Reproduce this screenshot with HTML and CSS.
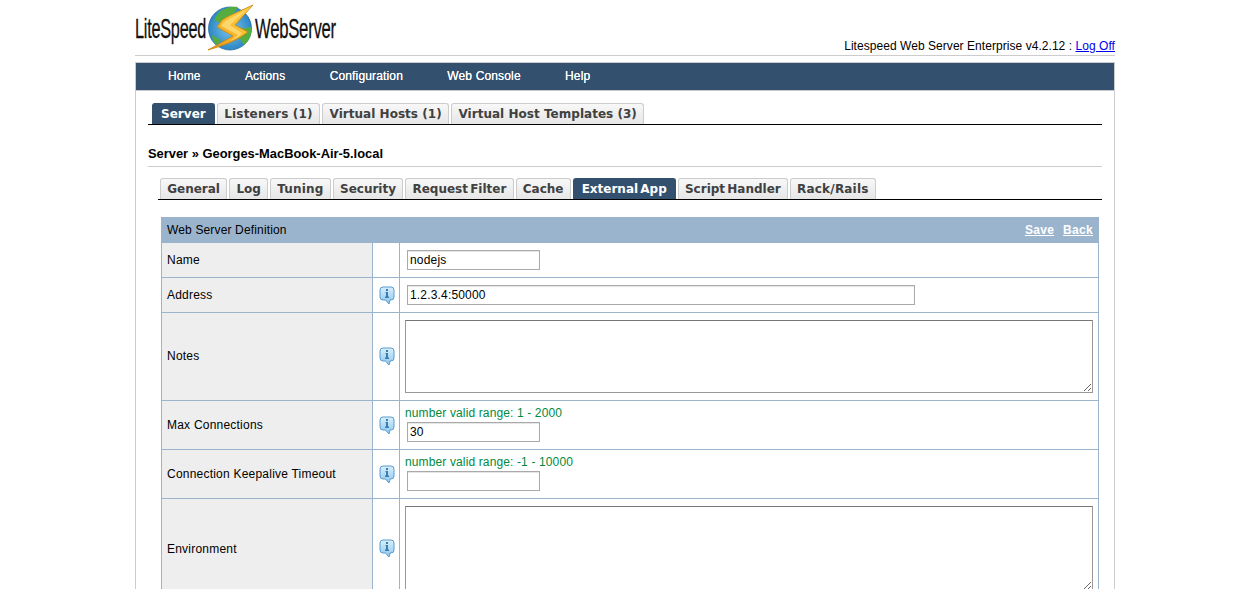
FILE: index.html
```html
<!DOCTYPE html>
<html lang="en">
<head>
<meta charset="utf-8">
<title>LiteSpeed Web Server</title>
<link rel="stylesheet" href="styles.css">
</head>
<body>
<svg class="defs" width="0" height="0" aria-hidden="true">
  <defs>
    <linearGradient id="bub" x1="0" y1="0" x2="0" y2="1">
      <stop offset="0" stop-color="#d9effb"/>
      <stop offset="1" stop-color="#8cc6ec"/>
    </linearGradient>
    <linearGradient id="bolt" x1="1" y1="0" x2="0" y2="1">
      <stop offset="0" stop-color="#fbd24a"/>
      <stop offset="0.5" stop-color="#f8bb2e"/>
      <stop offset="1" stop-color="#e58f14"/>
    </linearGradient>
    <radialGradient id="globe" cx="0.5" cy="0.5" r="0.55">
      <stop offset="0" stop-color="#7cc6ea"/>
      <stop offset="1" stop-color="#2380c2"/>
    </radialGradient>
    <symbol id="info" viewBox="0 0 16 19">
      <path d="M4 1h8a3 3 0 0 1 3 3v7a3 3 0 0 1-3 3h-1l-1 4-3.500-4H4a3 3 0 0 1-3-3V4a3 3 0 0 1 3-3z" fill="url(#bub)" stroke="#5b9bcd"/>
      <rect x="7" y="3" width="2" height="2" fill="#3a7db5"/>
      <path d="M6.500 6H9V10.500h1V12H6v-1.500h1V7h-.5z" fill="#3a7db5"/>
    </symbol>
  </defs>
</svg>
<div class="page">
  <header class="top">
    <div class="logo">
      <span class="logo-text lite">LiteSpeed</span>
      <svg class="logo-mark" width="50" height="50" viewBox="0 0 50 50" aria-hidden="true">
        <circle cx="25" cy="25.500" r="21.500" fill="url(#globe)" stroke="#2a6f9f" stroke-width=".8"/>
        <path d="M14 9c6-4 12-6 19-5l-5 7-8 4-5 5-6-3zM31 27l15-3c1 8-2 14-7 18l-4-6-6-3zM7 32l9 5-4 5c-3-2-5-6-5-10z" fill="#55ad3f"/>
        <path d="M48 2C38 7 26 11 17 17l-5 7 16 9L3 47c14-4 28-9 37-16l3-2-13-7z" fill="url(#bolt)" stroke="#c9820f" stroke-width=".8"/>
        <path d="M41 7C33 12 24 15 18 20l-2 3 17 9-8 6c5-2 9-4 12-8l-12-8z" fill="#fde58a" opacity=".65"/>
      </svg>
      <span class="logo-text web">WebServer</span>
    </div>
    <div class="status">Litespeed Web Server Enterprise v4.2.12 : <a href="#">Log Off</a></div>
  </header>

  <main class="box">
    <nav class="nav">
      <a href="#">Home</a>
      <a href="#">Actions</a>
      <a href="#">Configuration</a>
      <a href="#">Web Console</a>
      <a href="#">Help</a>
    </nav>
    <div class="content">
      <div class="tabs main-tabs">
        <a class="tab active" href="#">Server</a>
        <a class="tab tab-wide" href="#">Listeners (1)</a>
        <a class="tab" href="#">Virtual Hosts (1)</a>
        <a class="tab" href="#">Virtual Host Templates (3)</a>
      </div>
      <h1 class="crumb">Server » Georges-MacBook-Air-5.local</h1>
      <div class="tabs sub-tabs">
        <a class="tab" href="#">General</a>
        <a class="tab" href="#">Log</a>
        <a class="tab tab-wide" href="#">Tuning</a>
        <a class="tab" href="#">Security</a>
        <a class="tab" href="#">Request Filter</a>
        <a class="tab" href="#">Cache</a>
        <a class="tab active" href="#">External App</a>
        <a class="tab" href="#">Script Handler</a>
        <a class="tab tab-wide" href="#">Rack/Rails</a>
      </div>
      <section class="form">
        <div class="form-head">
          <span>Web Server Definition</span>
          <span class="actions"><a href="#">Save</a><a href="#">Back</a></span>
        </div>
        <table class="grid">
          <colgroup><col class="c1"><col class="c2"><col></colgroup>
          <tr class="r-name">
            <th>Name</th><td class="ic"></td>
            <td><input class="short" type="text" value="nodejs"></td>
          </tr>
          <tr class="r-addr">
            <th>Address</th>
            <td class="ic"><svg class="info"><use href="#info"/></svg></td>
            <td><input class="long" type="text" value="1.2.3.4:50000"></td>
          </tr>
          <tr class="r-notes">
            <th>Notes</th>
            <td class="ic"><svg class="info"><use href="#info"/></svg></td>
            <td><textarea class="notes"></textarea></td>
          </tr>
          <tr class="r-num">
            <th>Max Connections</th>
            <td class="ic"><svg class="info"><use href="#info"/></svg></td>
            <td class="num"><div class="hint">number valid range: 1 - 2000</div><input class="short" type="text" value="30"></td>
          </tr>
          <tr class="r-num">
            <th>Connection Keepalive Timeout</th>
            <td class="ic"><svg class="info"><use href="#info"/></svg></td>
            <td class="num"><div class="hint">number valid range: -1 - 10000</div><input class="short" type="text"></td>
          </tr>
          <tr class="r-env">
            <th>Environment</th>
            <td class="ic"><svg class="info"><use href="#info"/></svg></td>
            <td><textarea class="env"></textarea></td>
          </tr>
        </table>
      </section>
    </div>
  </main>
</div>
</body>
</html>
```
FILE: styles.css
```css
* { box-sizing: border-box; }
html { overflow: hidden; height: 589px; }
body {
  margin: 0;
  height: 589px;
  overflow: hidden;
  background: #fff;
  color: #000;
  font: 12px/14px "Liberation Sans", Arial, sans-serif;
}
.defs { position: absolute; }
.page { width: 980px; margin-left: 135px; }

.top {
  height: 56px;
  display: flex;
  justify-content: space-between;
  align-items: flex-end;
  border-bottom: 1px solid #ccc;
}
.logo { display: flex; align-items: center; height: 55px; }
.logo-text {
  font: 28px/30px "Liberation Sans", sans-serif;
  letter-spacing: -0.4px;
  color: #111;
  margin-top: 3px;
  transform-origin: left center;
  white-space: nowrap;
  -webkit-text-stroke: .3px #111;
}
.lite { width: 70px; transform: scaleX(.58); }
.web { width: 81px; transform: scaleX(.595); }
.logo-mark { flex: none; }
.status { padding-bottom: 2px; letter-spacing: .05px; }
.status a { color: #0000ee; }

.box {
  margin-top: 6px;
  border: 1px solid #ccc;
  border-bottom: 0;
}
.nav {
  height: 28px;
  background: #34506f;
  display: flex;
  align-items: center;
  padding: 0 0 2px 32px;
  gap: 44.300px;
  border-bottom: 1px solid #c8c8c8;
}
.nav a {
  color: #fff;
  text-decoration: none;
  letter-spacing: .15px;
  text-shadow: 0 0 .5px #fff;
}
.content { padding: 12px 12px 0; }

.tabs {
  display: flex;
  gap: 2px;
  border-bottom: 1px solid #000;
  font: bold 12px/20px "DejaVu Sans", Verdana, sans-serif;
}
.main-tabs { padding-left: 4px; height: 22px; letter-spacing: .03px; }
.sub-tabs {
  margin: 11px 0 0 10px;
  padding-left: 2px;
  height: 22px;
  word-spacing: -2px;
}
.tab {
  height: 21px;
  border: 1px solid #ccc;
  border-bottom: 0;
  border-radius: 3px 3px 0 0;
  background: linear-gradient(#f8f8f8, #e6e6e6);
  color: #404040;
  text-decoration: none;
  white-space: nowrap;
}
.main-tabs .tab { padding: 0 6.400px; }
.sub-tabs .tab { padding: 0 6.200px; }
.tab-wide { letter-spacing: .2px; }
.tabs .tab.active {
  padding: 0 8px;
  background: #34506f;
  border-color: #34506f;
  color: #fff;
}

.crumb {
  margin: 0;
  height: 42px;
  padding-top: 22px;
  font: bold 12.900px/14px "Liberation Sans", Arial, sans-serif;
  border-bottom: 1px solid #ccc;
}

.form { margin: 17px 3px 0 13px; }
.form-head {
  height: 25px;
  background: #9bb4ce;
  display: flex;
  justify-content: space-between;
  align-items: center;
  padding: 0 6px;
  letter-spacing: .15px;
}
.actions { display: flex; gap: 9px; }
.actions a {
  color: #fff;
  font-weight: bold;
  letter-spacing: .3px;
  text-decoration: underline;
}
.grid {
  width: 100%;
  table-layout: fixed;
  border-collapse: collapse;
}
.c1 { width: 211px; }
.c2 { width: 27px; }
.grid th, .grid td {
  border: 1px solid #9bb4ce;
  padding: 0 5px;
  vertical-align: middle;
}
.grid th {
  background: #eee;
  font-weight: normal;
  text-align: left;
  letter-spacing: .22px;
}
.r-notes th { padding-bottom: 2px; }
.grid td.ic { padding: 0; }
.grid td.num { padding-bottom: 3px; }
.r-name { height: 35px; }
.r-addr { height: 35px; }
.r-notes { height: 88px; }
.r-num { height: 49px; }
.r-env { height: 100px; }

.info { display: block; width: 16px; height: 19px; margin-left: 6px; }
.hint { color: #008a3c; margin-bottom: 2px; letter-spacing: .13px; }

input {
  display: block;
  margin-left: 2px;
  height: 20px;
  padding: 1px 2px;
  border: 1px solid #aaa;
  box-shadow: inset 0 1px 1px #e4e4e4;
  font: 12px/14px "Liberation Sans", Arial, sans-serif;
  letter-spacing: .17px;
  color: #000;
  background: #fff;
}
.short { width: 133px; }
.long { width: 508px; }
textarea {
  display: block;
  width: 688px;
  padding: 2px;
  border: 1px solid #999;
  border-top-color: #777;
  background: #fff;
}
.notes { height: 73px; }
.env { height: 85px; }
```
